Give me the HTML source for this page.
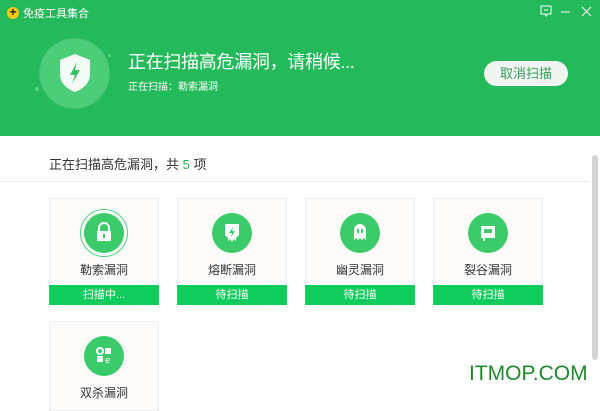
<!DOCTYPE html>
<html><head><meta charset="utf-8"><style>
*{margin:0;padding:0;box-sizing:border-box}
body{width:600px;height:400px;overflow:hidden;background:#fff;font-family:"Liberation Sans","Noto Sans CJK SC",sans-serif;position:relative}
.hd{position:absolute;left:0;top:0;width:600px;height:136px;background:#24b95a}
.t{position:absolute;color:#fff}
.card{position:absolute;width:110px;height:107px;background:#fcfbfa;border:1px solid #efefef}
.card .ic{position:absolute;left:34px;top:14px;width:40px;height:40px;border-radius:50%;background:#3ccb6a}
.card .nm{position:absolute;left:0;width:108px;top:62px;text-align:center;font-size:12px;color:#333}
.card .bar{position:absolute;left:-1px;top:86px;width:110px;height:20px;background:#10cc5c;color:#fff;font-size:11px;text-align:center;line-height:20px}
</style></head><body>
<div class="hd">
 <div style="position:absolute;left:7px;top:7px;width:12px;height:12px;border-radius:50%;background:#f3c912;color:#222;font-size:12px;line-height:11px;text-align:center;font-weight:bold">+</div>
 <div class="t" style="left:23px;top:5px;font-size:11px">免疫工具集合</div>
 <svg style="position:absolute;left:539px;top:5px" width="60" height="14"><path d="M2 1h10v8h-4l-1 2-1-2h-4z" fill="none" stroke="#fff"/><path d="M5 5h4" stroke="#fff"/><path d="M22 7h9" stroke="#fff"/><path d="M43 2l9 9M52 2l-9 9" stroke="#fff"/></svg>
 <div style="position:absolute;left:40px;top:39px;width:69px;height:69px;border-radius:50%;background:#4ccd78;box-shadow:0 0 0 1px rgba(255,255,255,.15)"></div>
 <svg style="position:absolute;left:55px;top:52px" width="40" height="42"><path d="M20 2 L35 8 V22 C35 31 28 37 20 40 C12 37 5 31 5 22 V8Z" fill="#f4fbf6"/><path d="M22 10 L15 23 H20 L17 32 L25 18 H20Z" fill="#3cbf68"/></svg>
 <div style="position:absolute;left:35px;top:87px;width:4px;height:4px;border-radius:50%;background:#5fd58a"></div>
 <div style="position:absolute;left:108px;top:54px;width:3px;height:3px;border-radius:50%;background:#5fd58a"></div>
 <div class="t" style="left:128px;top:48px;font-size:18px;letter-spacing:-0.3px">正在扫描高危漏洞，请稍候...</div>
 <div class="t" style="left:128px;top:78px;font-size:10px">正在扫描：勒索漏洞</div>
 <div style="position:absolute;left:484px;top:61px;width:84px;height:25px;border-radius:13px;background:#f0f5f1;color:#3a9a5c;font-size:13px;text-align:center;line-height:25px">取消扫描</div>
</div>
<div style="position:absolute;left:49px;top:154px;font-size:13px;color:#333">正在扫描高危漏洞，共 <span style="color:#22b14c">5</span> 项</div>
<div style="position:absolute;left:0;top:181px;width:590px;height:1px;background:#ececec"></div>
<div style="position:absolute;left:592px;top:155px;width:6px;height:205px;border-radius:3px;background:#d4d4d4"></div>

<div class="card" style="left:49px;top:198px"><div style="position:absolute;left:30px;top:10px;width:48px;height:48px;border-radius:50%;border:1px solid #4fd17c"></div><div class="ic"></div>
<svg style="position:absolute;left:44px;top:22px" width="20" height="22"><path d="M5 10V7a5 5 0 0 1 10 0v3" fill="none" stroke="#fff" stroke-width="2"/><rect x="3" y="10" width="14" height="10" fill="#fff"/><rect x="9" y="13" width="2" height="4" fill="#3ccb6a"/></svg>
<div class="nm">勒索漏洞</div><div class="bar">扫描中...</div></div>

<div class="card" style="left:177px;top:198px"><div class="ic"></div>
<svg style="position:absolute;left:44px;top:23px" width="20" height="22"><path d="M3 2h14v11l-3 3v3l-2-2-2 3-2-3-2 2v-3l-3-3z" fill="#fff"/><path d="M11 5 7 11h3l-1 4 4-6h-3z" fill="#3ccb6a"/></svg>
<div class="nm">熔断漏洞</div><div class="bar">待扫描</div></div>

<div class="card" style="left:305px;top:198px"><div class="ic"></div>
<svg style="position:absolute;left:44px;top:23px" width="20" height="22"><path d="M4 18V8a6 6 0 0 1 12 0v10l-2-2-2 2-2-2-2 2-2-2z" fill="#fff"/><rect x="7" y="7" width="2" height="4" fill="#3ccb6a"/><rect x="11" y="7" width="2" height="4" fill="#3ccb6a"/></svg>
<div class="nm">幽灵漏洞</div><div class="bar">待扫描</div></div>

<div class="card" style="left:433px;top:198px"><div class="ic"></div>
<svg style="position:absolute;left:44px;top:23px" width="20" height="22"><rect x="3" y="4" width="14" height="12" fill="#fff"/><rect x="6" y="7" width="8" height="4" fill="#3ccb6a"/><rect x="5" y="16" width="2" height="3" fill="#fff"/></svg>
<div class="nm">裂谷漏洞</div><div class="bar">待扫描</div></div>

<div class="card" style="left:49px;top:321px;height:90px"><div class="ic"></div>
<svg style="position:absolute;left:44px;top:23px" width="20" height="22"><circle cx="6" cy="6" r="3" fill="none" stroke="#fff" stroke-width="2"/><rect x="11" y="3" width="6" height="6" fill="#fff"/><rect x="3" y="11" width="6" height="6" fill="#fff"/><text x="11" y="18" fill="#fff" font-size="9" font-family="Liberation Sans">e</text></svg>
<div class="nm">双杀漏洞</div></div>

<div style="position:absolute;left:469px;top:362px;font-size:21px;color:#1f8a2a">ITMOP.COM</div>
</body></html>
